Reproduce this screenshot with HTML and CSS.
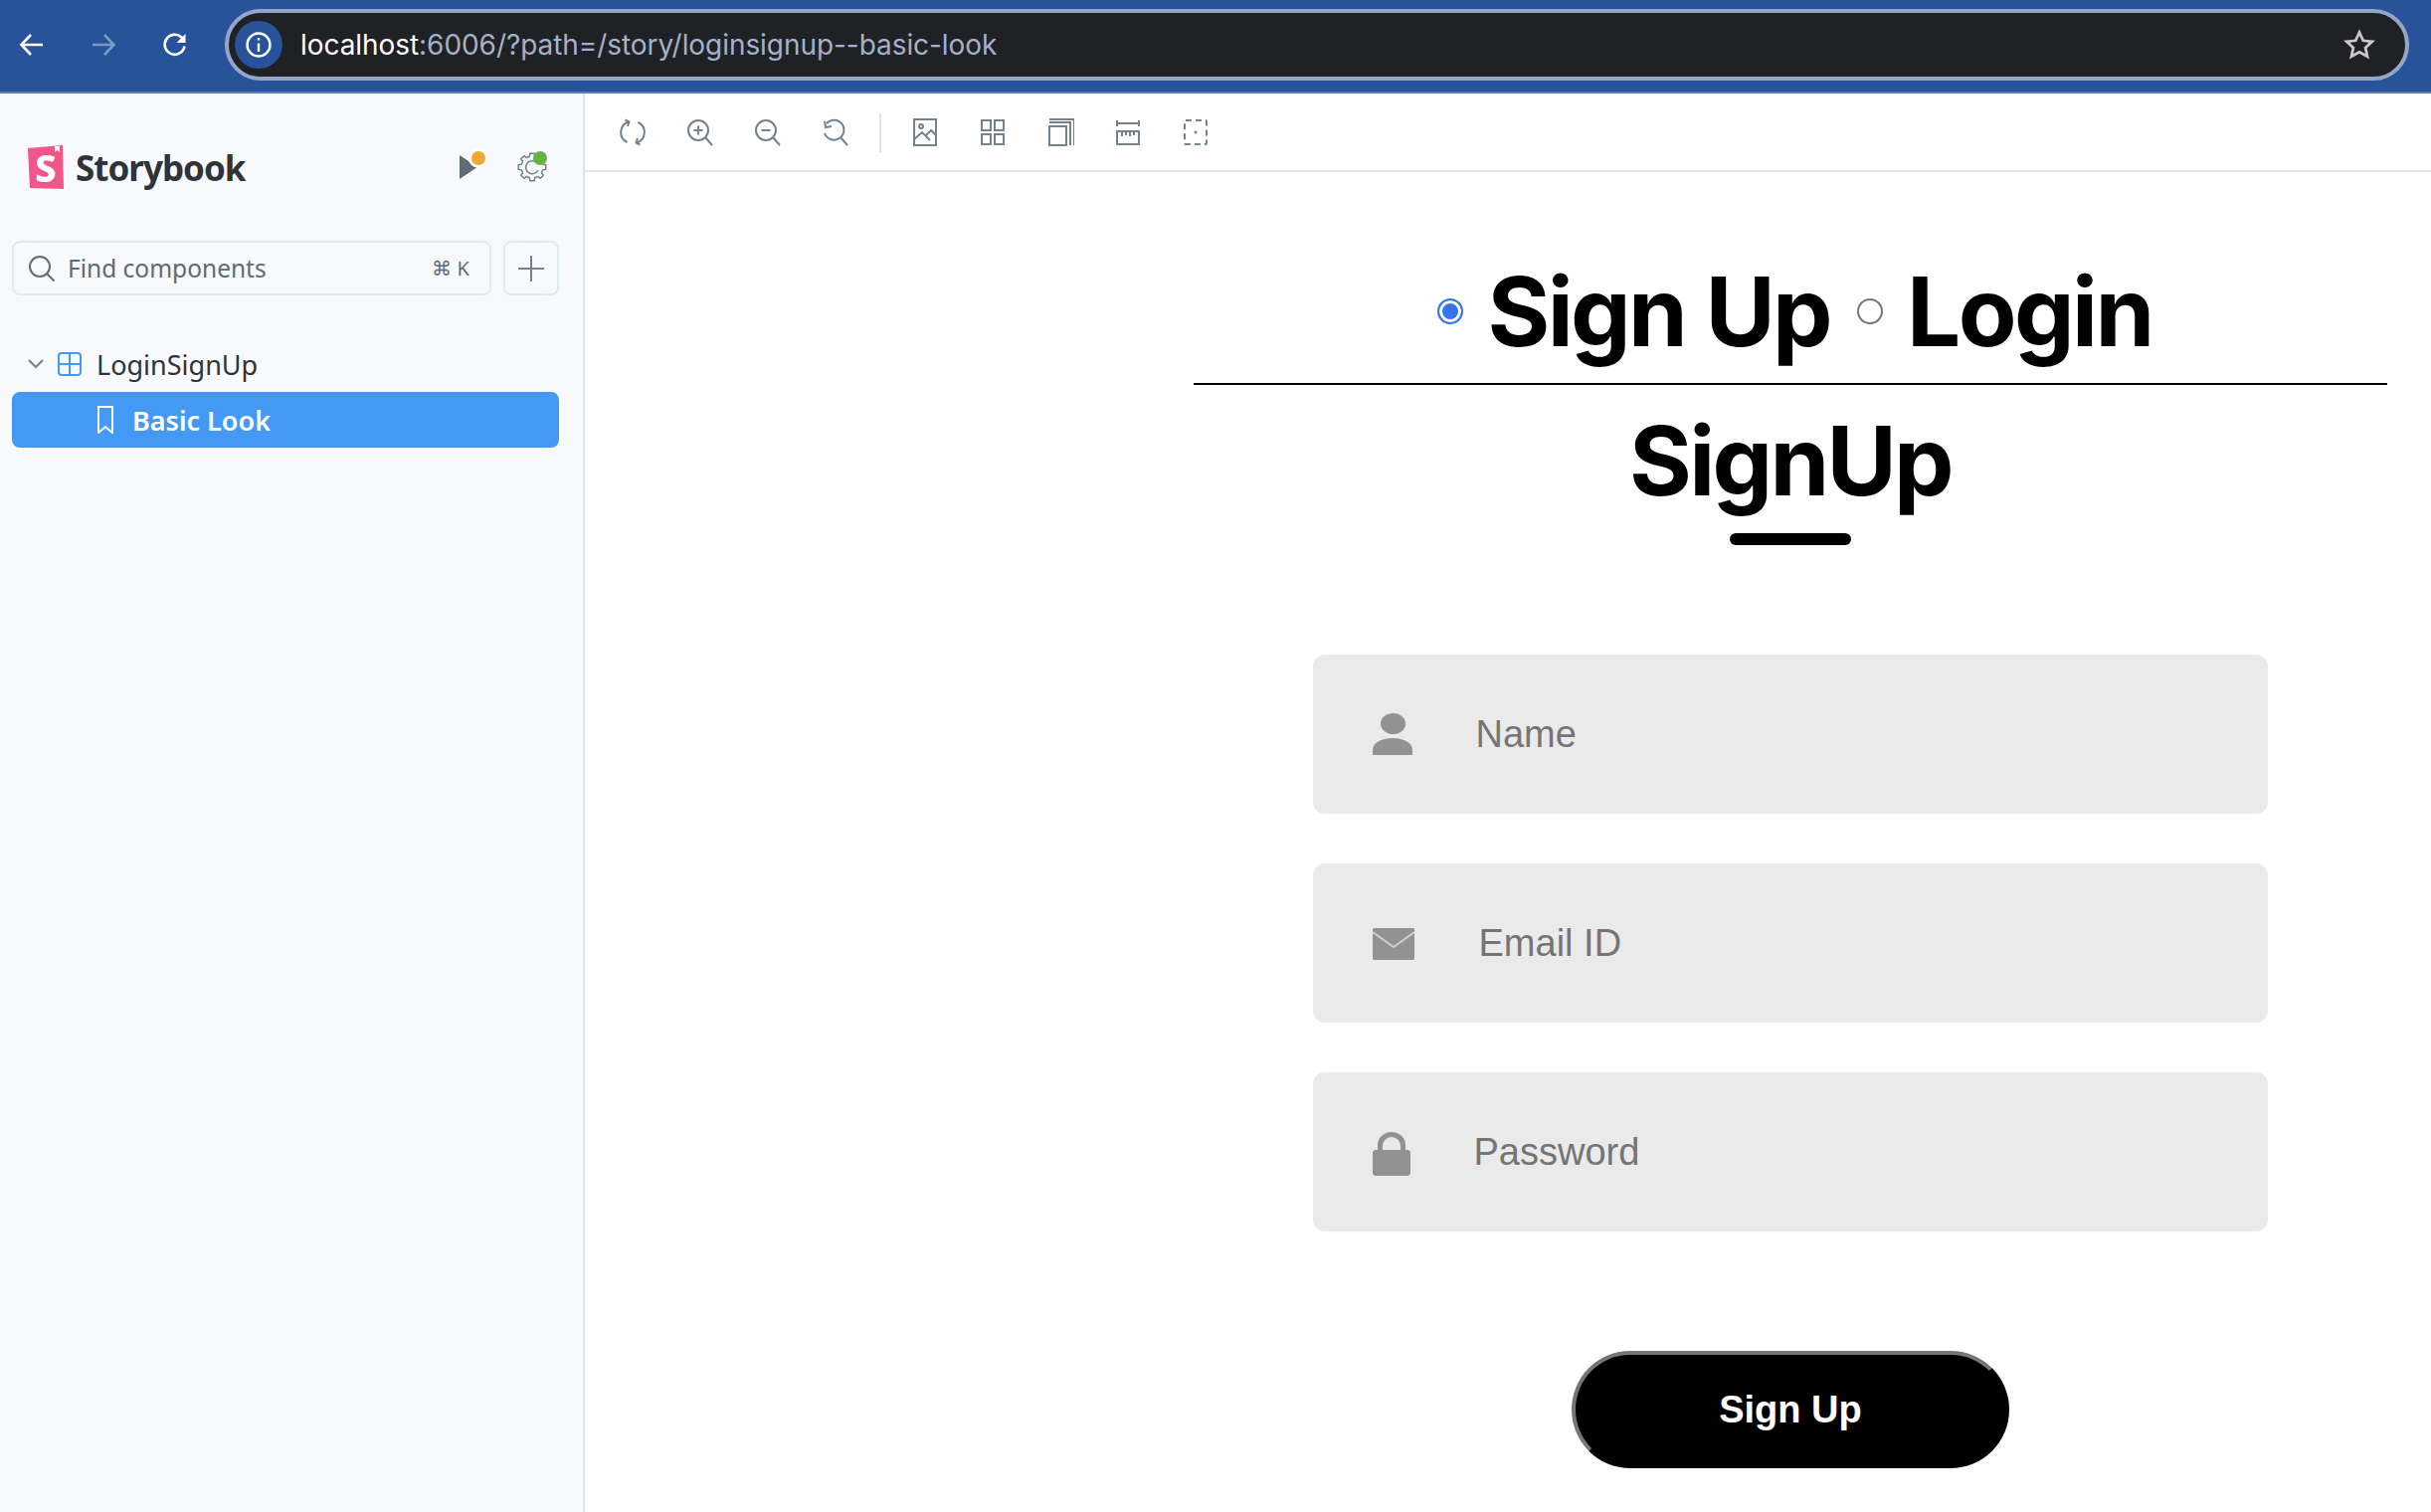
FILE: index.html
```html
<!DOCTYPE html>
<html lang="en">
<head>
<meta charset="utf-8">
<title>Storybook</title>
<link rel="stylesheet" href="styles.css">
</head>
<body>
<header class="browser">
  <svg class="nav" viewBox="0 0 28 28"><path d="M25 14H4M13 4 3.500 14 13 24"/></svg>
  <svg class="nav dim" viewBox="0 0 28 28"><path d="M3 14h21M15 4l9.500 10L15 24"/></svg>
  <svg class="nav" viewBox="0 0 28 28"><path d="M23.500 15.500A10 10 0 1 1 20.500 6.500L23.500 9.500"/><path class="solid" d="M24.500 3v9h-9z"/></svg>
  <div class="address">
    <span class="site-badge"><svg viewBox="0 0 28 28"><circle cx="14" cy="14" r="11.500"/><path d="M14 12.500V21M14 7v2.500"/></svg></span>
    <span class="url"><span class="host">localhost</span>:6006/?path=/story/loginsignup--basic-look</span>
    <svg class="star" viewBox="0 0 32 32"><path d="m16 3.500 3.800 8.300 9 1-6.700 6.100 1.900 8.900-8-4.500-8 4.500 1.900-8.900-6.700-6.100 9-1z"/></svg>
  </div>
</header>
<div class="main">
  <aside class="sidebar">
    <div class="brand">
      <span class="logo">
        <svg class="logo-shape" viewBox="0 0 36 44"><path class="logo-bg" d="M0 3 35 0l1 44-34-1z"/><path class="logo-tab" d="M27 1h5l0 6-2.500-2-2.500 2z"/></svg>
        <span class="logo-s">S</span>
      </span>
      <span class="brand-name">Storybook</span>
      <span class="brand-actions">
        <span class="action play"><svg viewBox="0 0 32 32"><path d="M4 4 22 16 4 28z"/></svg><i class="dot dot-orange"></i></span>
        <span class="action gear"><svg viewBox="-16 -16 32 32"><path d="M10.700-2.700 13.800-2.200 13.800 2.200 10.700 2.700 9.400 5.700 11.300 8.200 8.200 11.300 5.700 9.400 2.700 10.700 2.200 13.800-2.200 13.800-2.700 10.700-5.700 9.400-8.200 11.300-11.300 8.200-9.400 5.700-10.700 2.700-13.800 2.200-13.800-2.200-10.700-2.700-9.400-5.700-11.300-8.200-8.200-11.300-5.700-9.400-2.700-10.700-2.200-13.800 2.200-13.800 2.700-10.700"/><path d="M4-5A6.500 6.500 0 1 0 6 3"/></svg><i class="dot dot-green"></i></span>
      </span>
    </div>
    <div class="search-row">
      <div class="search">
        <svg class="search-icon" viewBox="0 0 28 28"><circle cx="12" cy="12" r="10"/><path d="m19.500 19.500 7 7"/></svg>
        <span class="search-text">Find components</span>
        <span class="kbd">⌘ K</span>
      </div>
      <div class="add"><svg viewBox="0 0 28 28"><path d="M14 1v26M1 14h26"/></svg></div>
    </div>
    <div class="tree">
      <div class="tree-row">
        <svg class="chevron" viewBox="0 0 16 10"><path d="m1 1 7 7 7-7"/></svg>
        <svg class="comp" viewBox="0 0 24 24"><rect x="1" y="1" width="22" height="22" rx="3"/><path d="M12 1v22M1 12h22"/></svg>
        <span class="tree-label">LoginSignUp</span>
      </div>
      <div class="tree-row active">
        <svg class="bookmark" viewBox="0 0 16 28"><path d="M1 1h14v26l-7-6-7 6z"/></svg>
        <span class="tree-label">Basic Look</span>
      </div>
    </div>
  </aside>
  <section class="stage">
    <div class="toolbar">
      <svg class="tool" viewBox="0 0 28 28"><path d="M10 3.500A11 11 0 0 0 8.500 24M18 24.500A11 11 0 0 0 19.500 4M6.500 1.500 10.500 3.500 9 8M21.500 26.500 17.500 24.500 19 20"/></svg>
      <svg class="tool" viewBox="0 0 28 28"><circle cx="12" cy="12" r="10"/><path d="m19 19 7 8M12 7.500v9M7.500 12h9"/></svg>
      <svg class="tool" viewBox="0 0 28 28"><circle cx="12" cy="12" r="10"/><path d="m19 19 7 8M7.500 12h9"/></svg>
      <svg class="tool" viewBox="0 0 28 28"><path d="M5 5A10 10 0 1 1 3 15M19 19l7 8M3 3l1 6 6-1"/></svg>
      <span class="tool-sep"></span>
      <svg class="tool" viewBox="0 0 28 28"><rect x="3" y="1" width="22" height="26"/><circle cx="10" cy="8" r="2"/><path d="m3 21 8-7 8 8M15 17l5-5 5 5"/></svg>
      <svg class="tool" viewBox="0 0 28 28"><rect x="3" y="2" width="9" height="10"/><rect x="16" y="2" width="9" height="10"/><rect x="3" y="16" width="9" height="10"/><rect x="16" y="16" width="9" height="10"/></svg>
      <svg class="tool" viewBox="0 0 28 28"><rect x="3" y="8" width="17" height="19"/><path d="M3 4h21v23M3 1h25v26"/></svg>
      <svg class="tool" viewBox="0 0 28 28"><path d="M3 5h22M3 2v6M25 2v6"/><rect x="3" y="13" width="22" height="13"/><path d="M8 13v5M12 13v4M16 13v5M20 13v4"/></svg>
      <svg class="tool" viewBox="0 0 28 28"><rect x="3" y="2" width="22" height="24" rx="1" class="dashed"/><circle cx="14" cy="14" r="1.500" class="solid"/></svg>
    </div>
    <div class="form">
      <div class="switch">
        <span class="radio on"></span><span class="switch-label">Sign Up</span>
        <span class="radio"></span><span class="switch-label">Login</span>
      </div>
      <h1 class="title">SignUp</h1>
      <div class="underline"></div>
      <div class="fields">
        <div class="field">
          <svg class="field-icon" viewBox="0 0 40 42"><ellipse cx="20.500" cy="10.500" rx="12.500" ry="10.500"/><path d="M0 42v-5C0 29 10 25 20 25s20 4 20 12v5z"/></svg>
          <span class="placeholder ph-name">Name</span>
        </div>
        <div class="field">
          <svg class="field-icon mail" viewBox="0 0 42 32"><path d="M1 0h40l1 1v30l-1 1H1l-1-1V1z"/><path class="flap" d="M0 4 21 19 42 4"/></svg>
          <span class="placeholder ph-email">Email ID</span>
        </div>
        <div class="field">
          <svg class="field-icon lock" viewBox="0 0 38 44"><path fill-rule="evenodd" d="M5 18v-5a14 13 0 0 1 28 0v5h3l2 2v22l-2 2H2l-2-2V20l2-2zm5 0h18v-4a9 9 0 0 0-18 0z"/></svg>
          <span class="placeholder ph-pass">Password</span>
        </div>
      </div>
      <button class="submit" type="button">Sign Up</button>
    </div>
  </section>
</div>
</body>
</html>
```
FILE: styles.css
```css
* { box-sizing: border-box; }
html, body { margin: 0; height: 100%; }
body { display: flex; flex-direction: column; background: #fff; overflow: hidden; font-family: "Noto Sans", sans-serif; }

.browser { height: 94px; flex: none; display: flex; align-items: center; padding: 0 22px 2px 18px; background: #28539a; border-bottom: 2px solid #5a7db5; }
.nav { width: 28px; height: 28px; margin-right: 44px; fill: none; stroke: #fff; stroke-width: 2.600; }
.nav.dim { stroke: #7c98c4; }
.nav .solid { fill: #fff; stroke: none; }
.nav:nth-child(3) { margin-right: 0; }
.address { margin-left: 36px; flex: 1; height: 72px; display: flex; align-items: center; padding: 0 30px 0 6px; background: #202124; border: 4px solid #93a5c8; border-radius: 36px; }
.site-badge { width: 48px; height: 48px; border-radius: 50%; background: #28539a; display: flex; align-items: center; justify-content: center; }
.site-badge svg { width: 28px; height: 28px; fill: none; stroke: #fff; stroke-width: 2.400; }
.url { margin-left: 18px; font: 28px Inter, sans-serif; letter-spacing: -0.060px; color: #a3b1cb; }
.host { color: #fff; }
.star { margin-left: auto; width: 32px; height: 32px; fill: none; stroke: #c9c9c9; stroke-width: 2.800; }

.main { flex: 1; display: flex; min-height: 0; }
.sidebar { width: 588px; flex: none; background: #f7f9fd; border-right: 2px solid #dbe3ea; padding: 52px 24px 0 12px; }
.brand { height: 44px; display: flex; align-items: center; padding-left: 16px; }
.logo { position: relative; width: 36px; height: 44px; flex: none; }
.logo-shape { width: 36px; height: 44px; display: block; }
.logo-bg { fill: #f0568a; }
.logo-tab { fill: #fff; }
.logo-s { position: absolute; inset: 0; text-align: center; font: 800 38px/44px "Noto Sans", sans-serif; color: #fff; }
.brand-name { margin-left: 12px; font: 700 35px "Noto Sans", sans-serif; letter-spacing: -1px; color: #2e3438; }
.brand-actions { margin-left: auto; display: flex; gap: 29px; padding-right: 11px; }
.action { position: relative; width: 32px; height: 32px; display: block; }
.action svg { width: 32px; height: 32px; display: block; }
.play svg { fill: #5f6b72; }
.gear svg { fill: none; stroke: #73828c; stroke-width: 1.500; stroke-linejoin: round; }
.dot { position: absolute; top: 0; width: 14px; height: 14px; border-radius: 50%; }
.dot-orange { left: 16px; background: #f0a832; box-shadow: 0 0 0 3px #fff; }
.dot-green { left: 17px; background: #66b344; }

.search-row { margin-top: 52px; display: flex; gap: 12px; }
.search { flex: 1; height: 55px; display: flex; align-items: center; padding: 0 20px 0 14px; border: 2px solid #dfe9f1; border-radius: 8px; }
.search-icon { width: 28px; height: 28px; fill: none; stroke: #5f6b72; stroke-width: 2; }
.search-text { margin-left: 12px; font-size: 24.500px; color: #5f6b72; }
.kbd { margin-left: auto; font-size: 20px; color: #5f6b72; }
.add { width: 56px; height: 55px; display: flex; align-items: center; justify-content: center; border: 2px solid #dfe9f1; border-radius: 8px; }
.add svg { width: 28px; height: 28px; fill: none; stroke: #73828c; stroke-width: 2; }

.tree { margin-top: 46px; display: flex; flex-direction: column; }
.tree-row { height: 46px; display: flex; align-items: center; padding-left: 16px; }
.chevron { width: 16px; height: 10px; fill: none; stroke: #73828c; stroke-width: 2; }
.comp { width: 24px; height: 24px; margin-left: 14px; fill: none; stroke: #4499f5; stroke-width: 2; }
.tree-label { margin-left: 15px; font-size: 27px; color: #2e3438; }
.tree-row.active { height: 56px; margin-top: 5px; padding-left: 86px; background: #4499f5; border-radius: 8px; }
.active .tree-label { margin-left: 19px; color: #fff; font-weight: 600; }
.bookmark { width: 16px; height: 28px; fill: none; stroke: #fff; stroke-width: 2; }

.stage { flex: 1; min-width: 0; }
.toolbar { height: 79px; display: flex; align-items: center; gap: 40px; padding: 1px 0 0 34px; border-bottom: 2px solid #e2e7eb; }
.tool { width: 28px; height: 28px; fill: none; stroke: #73828c; stroke-width: 2; flex: none; }
.tool .solid { fill: #73828c; stroke: none; }
.tool .dashed { stroke-dasharray: 6 4; }
.tool-sep { width: 2px; height: 39px; background: #dbe3ea; margin: 0 -10px 0 -10px; }

.form { width: 1200px; margin-left: 612px; padding-top: 86px; display: flex; flex-direction: column; align-items: center; }
.switch { width: 100%; height: 128px; padding: 0 0 18px 9px; display: flex; align-items: center; justify-content: center; border-bottom: 2px solid #000; font: 700 96px/110px Inter, sans-serif; letter-spacing: -2.600px; color: #000; }
.radio { width: 26px; height: 26px; border-radius: 50%; border: 2px solid #767676; background: #fff; flex: none; }
.radio.on { border-color: #3474ee; background: #3474ee; box-shadow: inset 0 0 0 3px #fff; }
.switch-label { margin: 0 27px 0 24px; }
.switch-label:last-child { margin-right: 0; }
.title { margin: 21px 0 0; font: 700 96px/110px Inter, sans-serif; letter-spacing: -2.700px; color: #000; }
.underline { width: 122px; height: 12px; margin-top: 18px; border-radius: 9px; background: #000; }
.fields { margin-top: 110px; display: flex; flex-direction: column; gap: 50px; }
.field { width: 960px; height: 160px; display: flex; align-items: center; padding-left: 60px; background: #eaeaea; border-radius: 12px; }
.field-icon { width: 40px; height: 42px; fill: #929292; flex: none; }
.field-icon.mail { width: 42px; height: 32px; margin-top: 2px; }
.field-icon.mail .flap { fill: none; stroke: #d0d0d0; stroke-width: 2; }
.field-icon.lock { width: 38px; height: 44px; margin-top: 4px; }
.placeholder { font: 38px "Liberation Sans", sans-serif; color: #757575; }
.ph-name { margin-left: 63.500px; }
.ph-email { margin-left: 64.500px; }
.ph-pass { margin-left: 63.500px; }
.submit { width: 440px; height: 118px; margin-top: 120px; border: 4px outset #767676; border-right-color: #000; border-bottom-color: #000; border-radius: 59px; background: #000; color: #fff; font: 700 38px "Liberation Sans", sans-serif; }
```
